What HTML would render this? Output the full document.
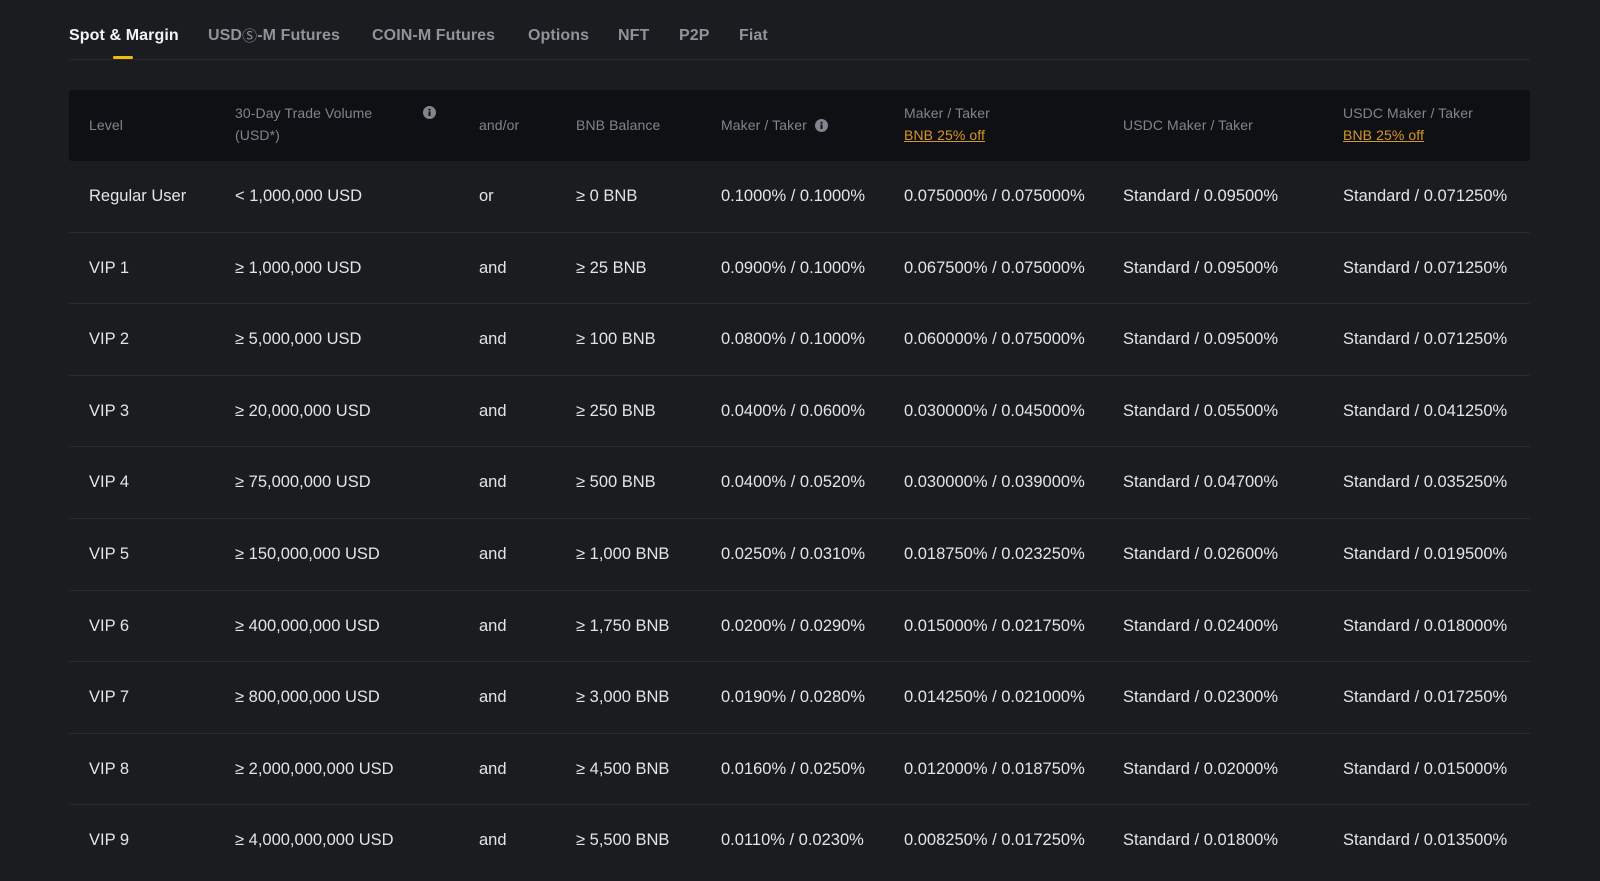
<!DOCTYPE html>
<html><head><meta charset="utf-8"><style>
body{margin:0;width:1600px;height:881px;background:#1b1c20;font-family:"Liberation Sans",sans-serif;color:#e6e7ea;overflow:hidden;position:relative}
.tab{position:absolute;top:26px;height:20px;line-height:20px;font-size:16px;color:#8f939b;font-weight:600;letter-spacing:0.1px;white-space:nowrap}
.tab span{display:inline-block;line-height:20px;height:20px;vertical-align:top;font-family:"DejaVu Sans",sans-serif;font-size:15px;font-weight:normal}
.tabline{position:absolute;left:69px;top:59px;width:1461px;height:1px;background:#2a2b30}
.ind{position:absolute;left:113px;top:56px;width:20px;height:3px;background:#f0b90b;border-radius:2px}
.head{position:absolute;left:69px;top:90px;width:1461px;height:71px;background:#0f1013;border-radius:3px}
.h{position:absolute;font-size:14px;color:#80848c;line-height:22px;letter-spacing:0.1px;white-space:nowrap}
.h a{color:#d6962c;text-decoration:underline}
.row{position:absolute;left:69px;width:1461px;height:71.6px;border-bottom:1px solid #2a2b30;box-sizing:border-box}
.c{position:absolute;top:0;line-height:71px;font-size:16.5px;color:#e3e4e7;letter-spacing:0px;white-space:nowrap}
.info{display:inline-block;width:13px;height:13px;vertical-align:-2px}
</style></head><body>
<div class="tab" style="left:69px;color:#f3f4f6">Spot &amp; Margin</div>
<div class="tab" style="left:208px">USD<span>Ⓢ</span>-M Futures</div>
<div class="tab" style="left:372px">COIN-M Futures</div>
<div class="tab" style="left:528px">Options</div>
<div class="tab" style="left:618px">NFT</div>
<div class="tab" style="left:679px">P2P</div>
<div class="tab" style="left:739px">Fiat</div>
<div class="tabline"></div><div class="ind"></div>
<div class="head">
<div class="h" style="left:20px;top:24px">Level</div>
<div class="h" style="left:166px;top:12px">30-Day Trade Volume<br>(USD*)</div>
<div class="h" style="left:354px;top:11px"><svg class="info" viewBox="0 0 12 12"><circle cx="6" cy="6" r="6" fill="#80848c"/><rect x="5.1" y="5" width="1.8" height="4.2" fill="#0f1013"/><circle cx="6" cy="3.4" r="1" fill="#0f1013"/></svg></div>
<div class="h" style="left:410px;top:24px">and/or</div>
<div class="h" style="left:507px;top:24px">BNB Balance</div>
<div class="h" style="left:652px;top:24px">Maker / Taker &nbsp;<svg class="info" viewBox="0 0 12 12"><circle cx="6" cy="6" r="6" fill="#80848c"/><rect x="5.1" y="5" width="1.8" height="4.2" fill="#0f1013"/><circle cx="6" cy="3.4" r="1" fill="#0f1013"/></svg></div>
<div class="h" style="left:835px;top:12px">Maker / Taker<br><a>BNB 25% off</a></div>
<div class="h" style="left:1054px;top:24px">USDC Maker / Taker</div>
<div class="h" style="left:1274px;top:12px">USDC Maker / Taker<br><a>BNB 25% off</a></div>
</div>
<div id="rows"></div>
<script>
var d=[
["Regular User","< 1,000,000 USD","or","≥ 0 BNB","0.1000% / 0.1000%","0.075000% / 0.075000%","Standard / 0.09500%","Standard / 0.071250%"],
["VIP 1","≥ 1,000,000 USD","and","≥ 25 BNB","0.0900% / 0.1000%","0.067500% / 0.075000%","Standard / 0.09500%","Standard / 0.071250%"],
["VIP 2","≥ 5,000,000 USD","and","≥ 100 BNB","0.0800% / 0.1000%","0.060000% / 0.075000%","Standard / 0.09500%","Standard / 0.071250%"],
["VIP 3","≥ 20,000,000 USD","and","≥ 250 BNB","0.0400% / 0.0600%","0.030000% / 0.045000%","Standard / 0.05500%","Standard / 0.041250%"],
["VIP 4","≥ 75,000,000 USD","and","≥ 500 BNB","0.0400% / 0.0520%","0.030000% / 0.039000%","Standard / 0.04700%","Standard / 0.035250%"],
["VIP 5","≥ 150,000,000 USD","and","≥ 1,000 BNB","0.0250% / 0.0310%","0.018750% / 0.023250%","Standard / 0.02600%","Standard / 0.019500%"],
["VIP 6","≥ 400,000,000 USD","and","≥ 1,750 BNB","0.0200% / 0.0290%","0.015000% / 0.021750%","Standard / 0.02400%","Standard / 0.018000%"],
["VIP 7","≥ 800,000,000 USD","and","≥ 3,000 BNB","0.0190% / 0.0280%","0.014250% / 0.021000%","Standard / 0.02300%","Standard / 0.017250%"],
["VIP 8","≥ 2,000,000,000 USD","and","≥ 4,500 BNB","0.0160% / 0.0250%","0.012000% / 0.018750%","Standard / 0.02000%","Standard / 0.015000%"],
["VIP 9","≥ 4,000,000,000 USD","and","≥ 5,500 BNB","0.0110% / 0.0230%","0.008250% / 0.017250%","Standard / 0.01800%","Standard / 0.013500%"]];
var xs=[20,166,410,507,652,835,1054,1274],h="";
d.forEach(function(r,i){h+='<div class="row" style="top:'+(161+i*71.6)+'px'+(i==9?';border:none':'')+'">';
r.forEach(function(t,j){h+='<div class="c" style="left:'+xs[j]+'px">'+t.replace('<','&lt;')+'</div>'});h+='</div>'});
document.getElementById('rows').innerHTML=h;
</script>
</body></html>
